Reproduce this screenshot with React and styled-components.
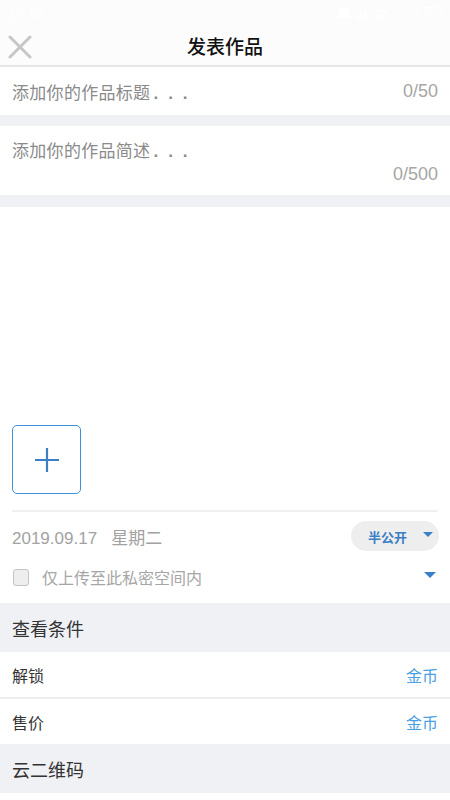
import React from "react";
import styled, { createGlobalStyle } from "styled-components";

const GlobalStyle = createGlobalStyle`
  html, body {
    margin: 0;
    padding: 0;
    background: #ffffff;
  }
  body {
    font-family: "Liberation Sans", "Noto Sans CJK SC", sans-serif;
  }
`;

export default function App() {
  return (
    <Page>
      <GlobalStyle />
      <StatusBar>
        <Clock>16:18</Clock>
        <StatusIcons>
          <svg width="70" height="14" viewBox="0 0 70 14" fill="#ffffff">
            <rect x="0" y="2" width="12" height="10" rx="2" />
            <rect x="18" y="9" width="3" height="4" />
            <rect x="22" y="6" width="3" height="7" />
            <rect x="26" y="3" width="3" height="10" />
            <path d="M36 6a10 10 0 0 1 14 0l-1.5 1.5a8 8 0 0 0-11 0z M40 10a5 5 0 0 1 6 0l-3 3z" />
          </svg>
          <Battery>58</Battery>
        </StatusIcons>
      </StatusBar>
      <NavBar>
        <CloseIcon viewBox="0 0 24 24" width="24" height="24">
          <path d="M2 2L22 22M22 2L2 22" stroke="#c6c6c6" strokeWidth="3" strokeLinecap="round" />
        </CloseIcon>
        <NavTitle>发表作品</NavTitle>
      </NavBar>

      <InputBlock $height={48}>
        <Placeholder>
          添加你的作品标题<Dots>...</Dots>
        </Placeholder>
        <Counter>0/50</Counter>
      </InputBlock>
      <Gap $height={11} />
      <InputBlock $height={69} $column>
        <Placeholder>
          添加你的作品简述<Dots>...</Dots>
        </Placeholder>
        <Counter $end>0/500</Counter>
      </InputBlock>
      <Gap $height={12} />

      <MediaArea>
        <AddBox>
          <svg width="26" height="26" viewBox="0 0 26 26">
            <path d="M13 1V25M1 13H25" stroke="#3b7fc6" strokeWidth="2.2" />
          </svg>
        </AddBox>
        <Divider />
        <DateRow>
          <DateText>2019.09.17&nbsp;&nbsp;&nbsp;星期二</DateText>
          <Pill>
            <PillLabel>半公开</PillLabel>
            <Caret $size={5} />
          </Pill>
        </DateRow>
        <CheckRow>
          <CheckBox />
          <CheckLabel>仅上传至此私密空间内</CheckLabel>
          <Caret $size={6} />
        </CheckRow>
      </MediaArea>

      <SectionHeader>查看条件</SectionHeader>
      <ListRow>
        <RowLabel>解锁</RowLabel>
        <RowValue>金币</RowValue>
      </ListRow>
      <RowDivider />
      <ListRow>
        <RowLabel>售价</RowLabel>
        <RowValue>金币</RowValue>
      </ListRow>
      <SectionHeader>云二维码</SectionHeader>
    </Page>
  );
}

const Page = styled.div`
  width: 450px;
  min-height: 800px;
  background: #ffffff;
  display: flex;
  flex-direction: column;
`;

const StatusBar = styled.div`
  height: 26px;
  background: #fcfcfc;
  display: flex;
  align-items: center;
  justify-content: space-between;
  padding: 0 8px;
  color: #ffffff;
`;

const Clock = styled.span`
  font-size: 14px;
`;

const StatusIcons = styled.div`
  display: flex;
  align-items: center;
  gap: 8px;
`;

const Battery = styled.span`
  font-size: 9px;
  border: 1px solid #ffffff;
  border-radius: 5px;
  padding: 0 7px;
`;

const NavBar = styled.div`
  height: 39px;
  background: #fcfcfc;
  border-bottom: 2px solid #e6e6e8;
  display: flex;
  align-items: center;
  justify-content: center;
  position: relative;
`;

const CloseIcon = styled.svg`
  position: absolute;
  left: 8px;
  top: 9px;
`;

const NavTitle = styled.div`
  font-family: "Noto Sans CJK SC", sans-serif;
  font-size: 19px;
  font-weight: 500;
  color: #111111;
`;

const InputBlock = styled.div`
  height: ${(p) => p.$height}px;
  box-sizing: border-box;
  padding: 0 12px;
  display: flex;
  flex-direction: ${(p) => (p.$column ? "column" : "row")};
  justify-content: ${(p) => (p.$column ? "center" : "space-between")};
  align-items: ${(p) => (p.$column ? "stretch" : "center")};
  background: #ffffff;
`;

const Placeholder = styled.div`
  font-family: "Noto Sans CJK SC", sans-serif;
  font-size: 17px;
  color: #8a8a8a;
  letter-spacing: 0.3px;
`;

const Dots = styled.span`
  font-family: "Liberation Sans", sans-serif;
  font-weight: 700;
  letter-spacing: 10px;
  margin-left: 3px;
`;

const Counter = styled.div`
  font-size: 18px;
  color: #a6a6a6;
  text-align: right;
  align-self: ${(p) => (p.$end ? "flex-end" : "auto")};
  margin-top: ${(p) => (p.$end ? "2px" : "0")};
`;

const Gap = styled.div`
  height: ${(p) => p.$height}px;
  background: #f0f1f5;
`;

const MediaArea = styled.div`
  display: flex;
  flex-direction: column;
  padding: 218px 12px 6px;
`;

const AddBox = styled.div`
  width: 69px;
  height: 69px;
  box-sizing: border-box;
  border: 1.5px solid #3b91dd;
  border-radius: 5px;
  display: flex;
  align-items: center;
  justify-content: center;
`;

const Divider = styled.div`
  height: 2px;
  background: #f0f0f2;
  margin-top: 16px;
`;

const DateRow = styled.div`
  height: 42px;
  margin-top: 3px;
  display: flex;
  align-items: center;
  justify-content: space-between;
`;

const DateText = styled.div`
  font-family: "Liberation Sans", "Noto Sans CJK SC", sans-serif;
  font-size: 17px;
  color: #a2a2a2;
`;

const Pill = styled.div`
  width: 88px;
  height: 30px;
  box-sizing: border-box;
  background: #eeeeee;
  border-radius: 15px;
  display: flex;
  align-items: center;
  justify-content: space-between;
  padding: 0 6px 0 17px;
  margin-right: -1px;
`;

const PillLabel = styled.span`
  font-family: "Noto Sans CJK SC", sans-serif;
  font-size: 13px;
  font-weight: 700;
  color: #3a7ec4;
`;

const Caret = styled.span`
  width: 0;
  height: 0;
  border-left: ${(p) => p.$size}px solid transparent;
  border-right: ${(p) => p.$size}px solid transparent;
  border-top: ${(p) => p.$size}px solid #3a80c8;
  margin-bottom: 4px;
`;

const CheckRow = styled.div`
  height: 40px;
  display: flex;
  align-items: center;
  padding-right: 2px;
`;

const CheckBox = styled.span`
  width: 14px;
  height: 15px;
  margin-left: 1px;
  border: 1.5px solid #c4c4c4;
  border-radius: 3px;
  background: #eeeeee;
`;

const CheckLabel = styled.span`
  flex: 1;
  margin-left: 13px;
  font-family: "Noto Sans CJK SC", sans-serif;
  font-size: 16px;
  color: #a6a6a6;
`;

const SectionHeader = styled.div`
  height: 49px;
  background: #f0f1f5;
  padding: 0 12px;
  display: flex;
  align-items: center;
  font-family: "Noto Sans CJK SC", sans-serif;
  font-size: 18px;
  color: #333333;
`;

const ListRow = styled.div`
  height: 45px;
  padding: 0 12px;
  display: flex;
  align-items: center;
  justify-content: space-between;
  background: #ffffff;
`;

const RowDivider = styled.div`
  height: 2px;
  background: #eeeeee;
`;

const RowLabel = styled.span`
  font-family: "Noto Sans CJK SC", sans-serif;
  font-size: 16px;
  color: #333333;
`;

const RowValue = styled.span`
  font-family: "Noto Sans CJK SC", sans-serif;
  font-size: 16px;
  color: #4aa0e2;
`;
